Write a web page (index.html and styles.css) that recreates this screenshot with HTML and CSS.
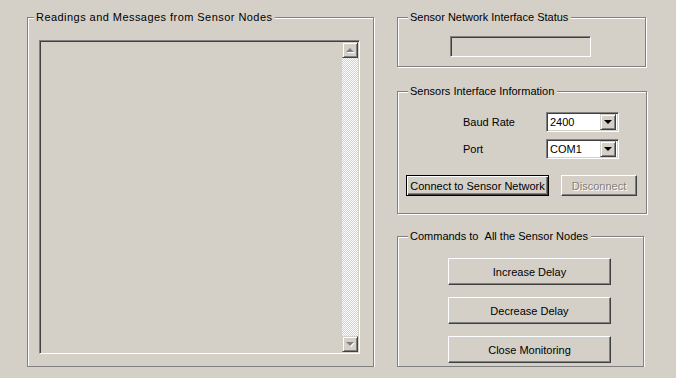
FILE: index.html
```html
<!DOCTYPE html>
<html lang="en">
<head>
    <meta charset="UTF-8">
    <meta name="viewport" content="width=device-width, initial-scale=1.0">
    <title>Sensor Network Monitor</title>
    <link rel="stylesheet" href="styles.css">
</head>
<body>
    <div class="dialog">
        <div class="group readings">
            <span class="group-title first">Readings and Messages from Sensor Nodes</span>
            <div class="log">
                <div class="log-text"></div>
                <div class="scrollbar">
                    <div class="scroll-btn"><span class="arrow up"></span></div>
                    <div class="scroll-track"></div>
                    <div class="scroll-btn"><span class="arrow down"></span></div>
                </div>
            </div>
        </div>

        <div class="side">
            <div class="group status">
                <span class="group-title">Sensor Network Interface Status</span>
                <div class="status-field"></div>
            </div>

            <div class="group interface">
                <span class="group-title">Sensors Interface Information</span>
                <div class="field-row">
                    <span class="field-label">Baud Rate</span>
                    <div class="combo">
                        <span class="combo-value">2400</span>
                        <span class="combo-btn"><span class="arrow down dark"></span></span>
                    </div>
                </div>
                <div class="field-row">
                    <span class="field-label">Port</span>
                    <div class="combo">
                        <span class="combo-value">COM1</span>
                        <span class="combo-btn"><span class="arrow down dark"></span></span>
                    </div>
                </div>
                <div class="button-row">
                    <button class="btn default connect">Connect to Sensor Network</button>
                    <button class="btn disconnect" disabled>Disconnect</button>
                </div>
            </div>

            <div class="group commands">
                <span class="group-title">Commands to &nbsp;All the Sensor Nodes</span>
                <div class="command-list">
                    <button class="btn command">Increase Delay</button>
                    <button class="btn command">Decrease Delay</button>
                    <button class="btn command">Close Monitoring</button>
                </div>
            </div>
        </div>
    </div>
</body>
</html>
```

FILE: styles.css
```css
* {
    box-sizing: border-box;
}
body {
    margin: 0;
    background: #d4d0c8;
    color: #000;
    font-family: "Liberation Sans", Arial, sans-serif;
    font-size: 11px;
}
.dialog {
    display: flex;
    align-items: flex-start;
    gap: 23px;
    padding: 17px 0 0 27px;
}

/* etched group boxes */
.group {
    position: relative;
    border: 1px solid #808080;
    box-shadow: inset 1px 1px 0 #fff, 1px 1px 0 #fff;
}
.group-title {
    position: absolute;
    top: -8px;
    left: 10px;
    padding: 0 3px 0 2px;
    background: #d4d0c8;
    line-height: 14px;
    white-space: nowrap;
}
.group-title.first {
    left: 6px;
    letter-spacing: 0.45px;
}
.readings {
    width: 347px;
    height: 350px;
    padding: 22px 0 0 11px;
}
.side {
    display: flex;
    flex-direction: column;
}
.status {
    width: 249px;
    height: 50px;
    padding: 18px 0 0 52px;
}
.interface {
    width: 250px;
    height: 123px;
    margin-top: 24px;
    padding: 20px 0 0 8px;
}
.commands {
    width: 247px;
    height: 131px;
    margin-top: 22px;
    padding: 21px 0 0 50px;
}

/* sunken fields */
.log, .status-field, .combo {
    border: 1px solid;
    border-color: #808080 #fff #fff #808080;
    box-shadow: inset 1px 1px 0 #404040, inset -1px -1px 0 #d4d0c8;
}
.log {
    display: flex;
    width: 321px;
    height: 314px;
    padding: 1px;
}
.log-text {
    flex: 1;
}
.scrollbar {
    display: flex;
    flex-direction: column;
    width: 16px;
}
.scroll-track {
    flex: 1;
    background: repeating-conic-gradient(#d4d0c8 0 25%, #fff 0 50%) 0 0 / 2px 2px;
}
.scroll-btn, .combo-btn {
    display: flex;
    align-items: center;
    justify-content: center;
    width: 16px;
    height: 16px;
    background: #d4d0c8;
    border: 1px solid;
    border-color: #d4d0c8 #404040 #404040 #d4d0c8;
    box-shadow: inset 1px 1px 0 #fff, inset -1px -1px 0 #808080;
}
.arrow {
    width: 0;
    height: 0;
    border-left: 4px solid transparent;
    border-right: 4px solid transparent;
    filter: drop-shadow(1px 1px 0 #fff);
}
.arrow.up {
    border-bottom: 4px solid #808080;
}
.arrow.down {
    border-top: 4px solid #808080;
}
.arrow.dark {
    border-top-color: #000;
    filter: none;
}
.status-field {
    width: 141px;
    height: 21px;
}

.field-row {
    display: flex;
    align-items: center;
    margin-bottom: 7px;
    padding-left: 57px;
}
.field-label {
    width: 83px;
}
.combo {
    display: flex;
    align-items: center;
    justify-content: space-between;
    width: 73px;
    height: 20px;
    padding: 1px 2px 1px 3px;
    background: #fff;
}
.combo-value {
    line-height: 14px;
}

/* push buttons */
.btn {
    display: flex;
    align-items: center;
    justify-content: center;
    padding: 0;
    font-family: inherit;
    font-size: 11px;
    color: #000;
    background: #d4d0c8;
    border: 1px solid;
    border-color: #fff #404040 #404040 #fff;
    box-shadow: inset -1px -1px 0 #808080;
}
.btn.default {
    border-color: #000;
    box-shadow: inset 1px 1px 0 #fff, inset -1px -1px 0 #404040, inset -2px -2px 0 #808080;
}
.btn:disabled {
    color: #808080;
    text-shadow: 1px 1px 0 #fff;
}
.button-row {
    display: flex;
    gap: 12px;
    margin-top: 16px;
}
.connect {
    width: 143px;
    height: 21px;
}
.disconnect {
    width: 76px;
    height: 21px;
}
.command-list {
    display: flex;
    flex-direction: column;
    gap: 12px;
}
.command {
    width: 163px;
    height: 27px;
}
```
